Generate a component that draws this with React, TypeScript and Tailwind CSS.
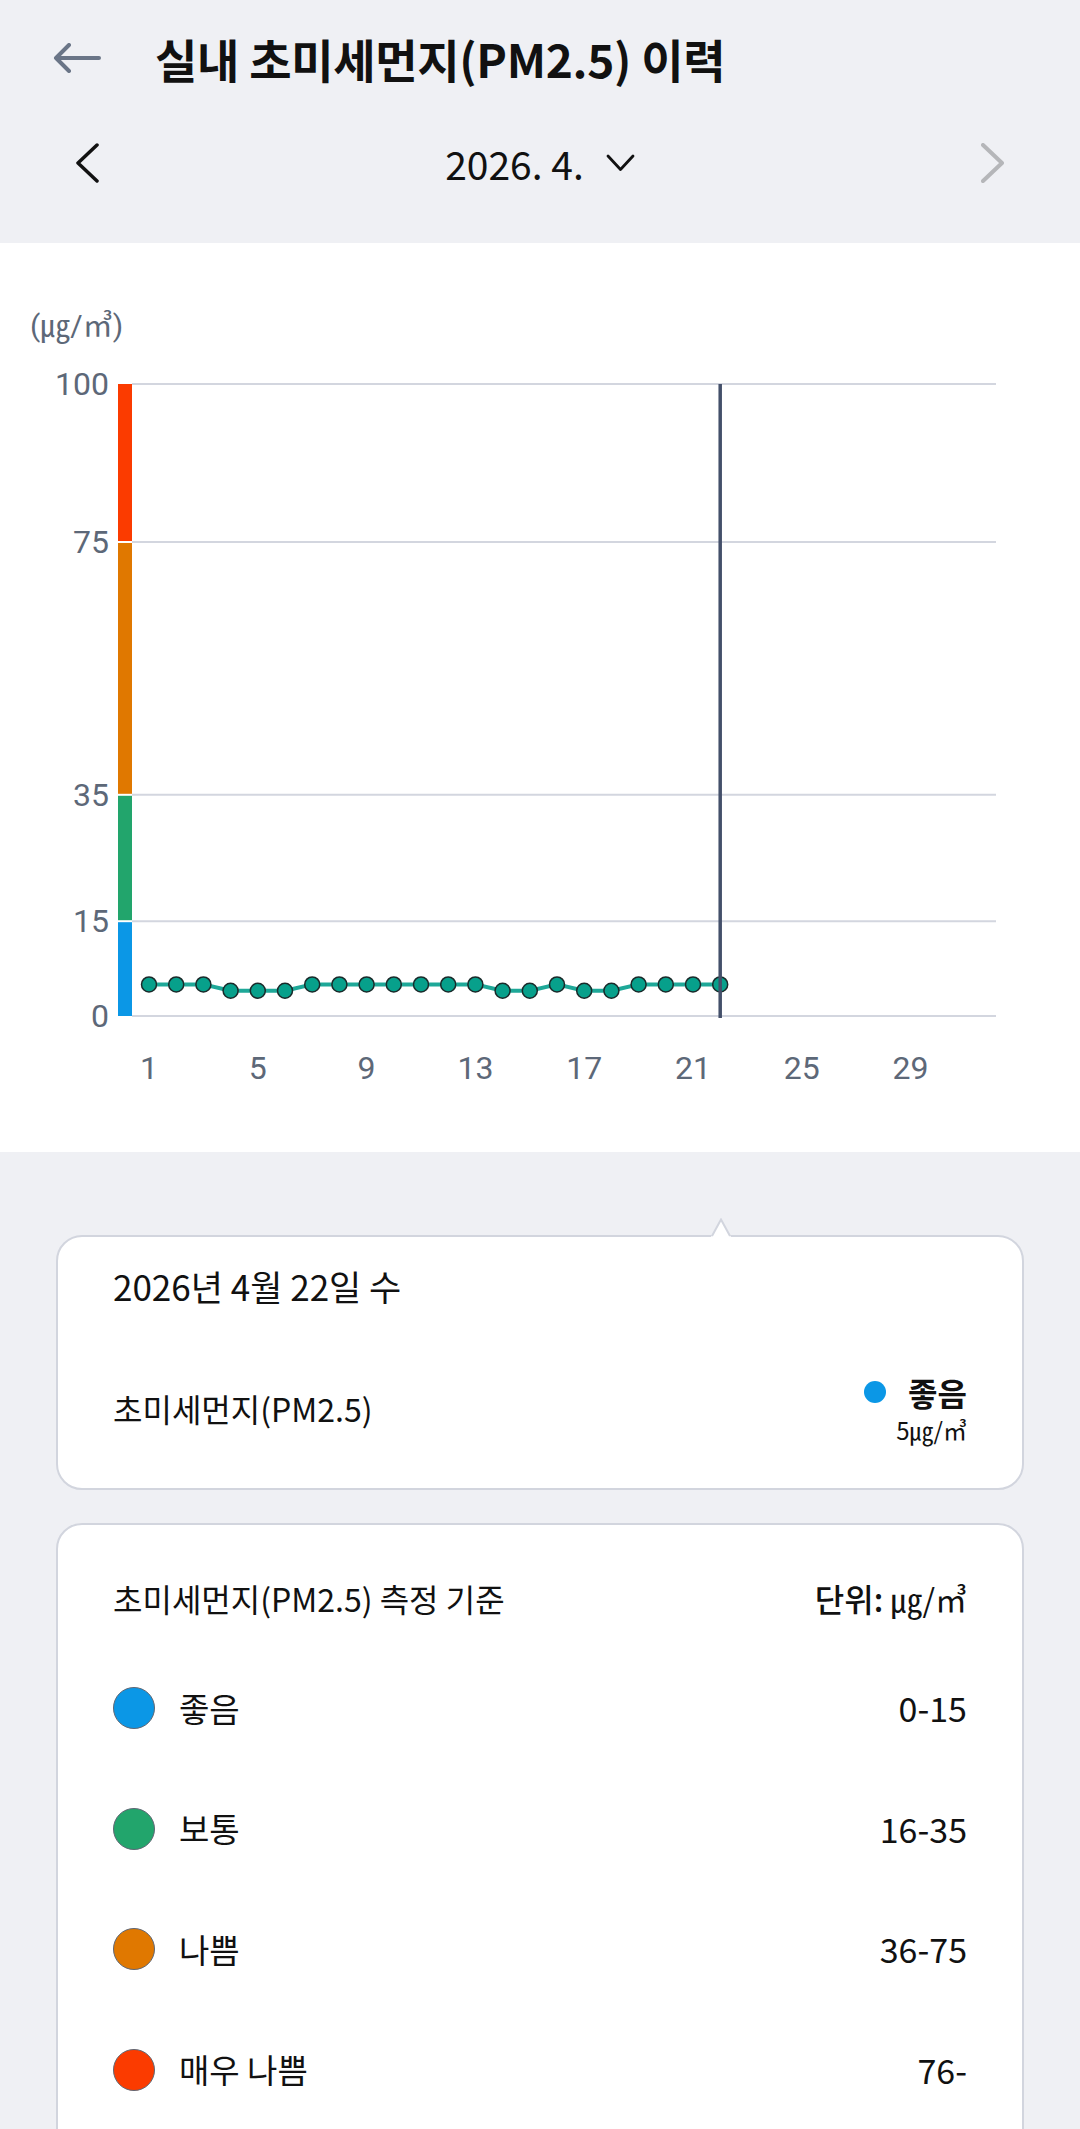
import React from "react";

// daily PM2.5 values for April, up to today (22nd)
const values: number[] = [5, 5, 5, 4, 4, 4, 5, 5, 5, 5, 5, 5, 5, 4, 4, 5, 4, 4, 5, 5, 5, 5];

const xOf = (day: number) => 149 + (day - 1) * 27.2;
const yOf = (v: number) => 773 - v * 6.32;

type Level = {
  label: string;
  range: string;
  color: string;
};

const levels: Array<Level> = [
  { label: "좋음", range: "0-15", color: "#0b97e6" },
  { label: "보통", range: "16-35", color: "#22a56c" },
  { label: "나쁨", range: "36-75", color: "#e07800" },
  { label: "매우 나쁨", range: "76-", color: "#fb3b00" },
];

function Chart() {
  const grid = [100, 75, 35, 15, 0];
  const bands = [
    { from: 75, to: 100, color: "#fb3b00" },
    { from: 35, to: 75, color: "#e07800" },
    { from: 15, to: 35, color: "#22a56c" },
    { from: 0, to: 15, color: "#0b97e6" },
  ];
  const ticks = [1, 5, 9, 13, 17, 21, 25, 29];
  const points = values.map((v, i) => `${xOf(i + 1)},${yOf(v)}`).join(" ");

  return (
    <svg
      width="1080"
      height="909"
      viewBox="0 0 1080 909"
      className="block"
      style={{ fontFamily: "Roboto, 'Noto Sans CJK KR', sans-serif" }}
    >
      <text x="30" y="93" fontSize="30" fill="#5d6878">
        (㎍/㎥)
      </text>

      {grid.map((g) => (
        <line key={g} x1="132" x2="996" y1={yOf(g)} y2={yOf(g)} stroke="#d3d6df" strokeWidth="2" />
      ))}

      {bands.map((b) => (
        <rect
          key={b.from}
          x="118"
          width="14"
          y={yOf(b.to) + (b.to === 100 ? 0 : 1)}
          height={yOf(b.from) - yOf(b.to) - (b.to === 100 ? 1 : 2) + (b.from === 0 ? 1 : 0)}
          fill={b.color}
        />
      ))}

      {grid.map((g) => (
        <text key={g} x="109" y={yOf(g) + 11} fontSize="32" fill="#5d6878" textAnchor="end">
          {g}
        </text>
      ))}

      {ticks.map((d) => (
        <text key={d} x={xOf(d)} y="836" fontSize="32" fill="#5d6878" textAnchor="middle">
          {d}
        </text>
      ))}

      <polyline points={points} fill="none" stroke="#1ea898" strokeWidth="4" strokeLinejoin="round" />
      {values.map((v, i) => (
        <circle key={i} cx={xOf(i + 1)} cy={yOf(v)} r="7.5" fill="#07a08b" stroke="#1a2a2a" strokeWidth="1.5" />
      ))}

      <line x1={xOf(22)} x2={xOf(22)} y1="141" y2="775" stroke="#44506a" strokeWidth="3.5" />
    </svg>
  );
}

export default function App() {
  return (
    <div className="w-[1080px] h-[2129px] overflow-hidden bg-[#eff0f4] font-['Noto_Sans_CJK_KR','Noto_Sans',sans-serif] text-[#111]">
      {/* header */}
      <div className="h-[243px]">
        <div className="flex h-[116px] items-center pl-[53px]">
          <svg width="48" height="30" viewBox="0 0 48 30">
            <path
              d="M46 15H3M16 2L3 15l13 13"
              fill="none"
              stroke="#6a7587"
              strokeWidth="4"
              strokeLinecap="round"
              strokeLinejoin="round"
            />
          </svg>
          <h1 className="ml-[54px] text-[46px] font-bold leading-none tracking-[-0.3px]">
            실내 초미세먼지(PM2.5) 이력
          </h1>
        </div>
        <div className="flex h-[94px] items-center px-[76px]">
          <svg width="23" height="40" viewBox="0 0 23 40">
            <path d="M21 2L2 20l19 18" fill="none" stroke="#111" strokeWidth="3.5" strokeLinecap="round" strokeLinejoin="round" />
          </svg>
          <div className="flex flex-1 items-center justify-center gap-[22px]">
            <span className="text-[39px] leading-none">2026. 4.</span>
            <svg width="29" height="18" viewBox="0 0 29 18">
              <path d="M2 2l12.5 13.5L27 2" fill="none" stroke="#111" strokeWidth="2.8" strokeLinecap="round" strokeLinejoin="round" />
            </svg>
          </div>
          <svg width="23" height="40" viewBox="0 0 23 40">
            <path d="M2 2l19 18L2 38" fill="none" stroke="#b5b6b9" strokeWidth="4" strokeLinecap="round" strokeLinejoin="round" />
          </svg>
        </div>
      </div>

      {/* chart */}
      <div className="h-[909px] bg-white">
        <Chart />
      </div>

      {/* cards */}
      <div className="flex flex-col gap-[33px] px-[56px] pt-[83px]">
        <div className="relative h-[255px] rounded-[26px] border-2 border-[#d2d5de] bg-white px-[55px] pt-[29px]">
          <svg className="absolute left-[653px] top-[-19px]" width="20" height="19" viewBox="0 0 20 19">
            <path d="M0 19L10 1l10 18z" fill="#fff" />
            <path d="M1 18L10 1.5 19 18" fill="none" stroke="#d2d5de" strokeWidth="2" />
          </svg>
          <p className="text-[35px] leading-[40px]">2026년 4월 22일 수</p>
          <div className="mt-[68px] flex items-center justify-between">
            <p className="text-[32px] leading-[40px]">초미세먼지(PM2.5)</p>
            <div className="flex flex-col items-end">
              <div className="flex h-[36px] items-center gap-[22px]">
                <span className="h-[22px] w-[22px] rounded-full bg-[#0b97e6]" />
                <span className="text-[32px] font-bold leading-none">좋음</span>
              </div>
              <span className="mt-[8px] text-[24px] leading-none">5㎍/㎥</span>
            </div>
          </div>
        </div>

        <div className="h-[700px] rounded-[26px] border-2 border-[#d2d5de] bg-white px-[55px] pt-[53px]">
          <div className="flex items-center justify-between">
            <p className="text-[32px] leading-[40px]">초미세먼지(PM2.5) 측정 기준</p>
            <p className="text-[32px] leading-[40px]">
              <span className="font-medium">단위:</span> ㎍/㎥
            </p>
          </div>
          <div className="mt-[30px] flex flex-col">
            {levels.map((l) => (
              <div key={l.label} className="flex h-[120.5px] items-center">
                <span
                  className="h-[42px] w-[42px] rounded-full border-[1.5px] border-[#5f6673]"
                  style={{ backgroundColor: l.color }}
                />
                <span className="ml-[24px] flex-1 text-[33px] leading-none">{l.label}</span>
                <span className="text-[34px] leading-none">{l.range}</span>
              </div>
            ))}
          </div>
        </div>
      </div>
    </div>
  );
}
